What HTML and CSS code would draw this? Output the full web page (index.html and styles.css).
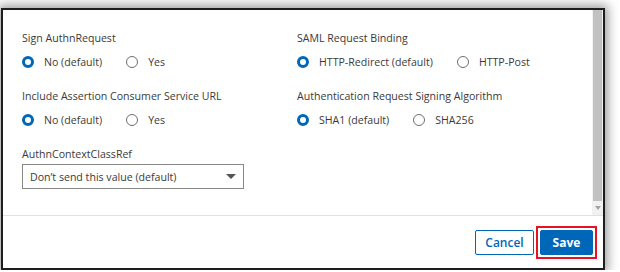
FILE: index.html
```html
<!doctype html>
<html lang="en">
  <head>
    <meta charset="UTF-8" />
    <title>SAML Settings</title>
    <link rel="stylesheet" href="styles.css">
  </head>
  <body>
    <div class="dialog">
      <div class="dialog-body">
        <div class="settings">
          <div class="field">
            <div class="field-label">Sign AuthnRequest</div>
            <div class="radio-group">
              <label class="radio"><span class="dot checked"></span>No (default)</label>
              <label class="radio"><span class="dot"></span>Yes</label>
            </div>
          </div>
          <div class="field">
            <div class="field-label">SAML Request Binding</div>
            <div class="radio-group">
              <label class="radio"><span class="dot checked"></span>HTTP-Redirect (default)</label>
              <label class="radio"><span class="dot"></span>HTTP-Post</label>
            </div>
          </div>
          <div class="field">
            <div class="field-label">Include Assertion Consumer Service URL</div>
            <div class="radio-group">
              <label class="radio"><span class="dot checked"></span>No (default)</label>
              <label class="radio"><span class="dot"></span>Yes</label>
            </div>
          </div>
          <div class="field">
            <div class="field-label">Authentication Request Signing Algorithm</div>
            <div class="radio-group">
              <label class="radio"><span class="dot checked"></span>SHA1 (default)</label>
              <label class="radio"><span class="dot"></span>SHA256</label>
            </div>
          </div>
          <div class="field">
            <div class="field-label select-label">AuthnContextClassRef</div>
            <div class="select">
              <span>Don’t send this value (default)</span>
              <span class="caret"></span>
            </div>
          </div>
        </div>
        <div class="scrollbar">
          <div class="thumb"></div>
          <div class="arrow"></div>
        </div>
      </div>
      <div class="dialog-footer">
        <button class="btn btn-outline">Cancel</button>
        <div class="highlight">
          <button class="btn btn-primary">Save</button>
        </div>
      </div>
    </div>
  </body>
</html>
```

FILE: styles.css
```css
body {
  margin: 0;
  padding: 8px 0 0 1px;
  background-color: #ffffff;
  font-family: "Open Sans", Arial, sans-serif;
  font-size: 10.6px;
  color: #3b3a39;
}
.dialog {
  width: 600px;
  height: 258px;
  border: 2px solid #1e1e1e;
  background-color: #ffffff;
  box-shadow: 0 0 10px 3px rgba(0, 0, 0, 0.38);
  display: flex;
  flex-direction: column;
}
.dialog-body {
  display: flex;
  height: 205px;
}
.settings {
  flex: 1;
  padding: 20px 0 0 19px;
  display: grid;
  grid-template-columns: 275px 1fr;
  grid-auto-rows: min-content;
  row-gap: 18px;
}
.field-label {
  line-height: 16px;
  margin-bottom: 8px;
}
.select-label {
  margin-bottom: 2px;
}
.radio-group {
  display: flex;
  gap: 24px;
  height: 16px;
  align-items: center;
}
.radio {
  display: flex;
  align-items: center;
  gap: 10px;
}
.dot {
  width: 12px;
  height: 12px;
  border: 1px solid #6e6e6e;
  border-radius: 50%;
  box-sizing: border-box;
}
.dot.checked {
  border: 3.5px solid #0067b8;
}
.select {
  width: 222px;
  height: 25px;
  box-sizing: border-box;
  border: 1px solid #8a8886;
  display: flex;
  align-items: center;
  justify-content: space-between;
  padding: 0 7px 0 7px;
}
.caret {
  width: 0;
  height: 0;
  border-left: 5px solid transparent;
  border-right: 5px solid transparent;
  border-top: 5px solid #555555;
}
.scrollbar {
  width: 11px;
  background-color: #f1f1f1;
  display: flex;
  flex-direction: column;
  align-items: center;
}
.thumb {
  width: 9px;
  height: 191px;
  background-color: #c1c1c1;
}
.arrow {
  margin-top: 5px;
  width: 0;
  height: 0;
  border-left: 3px solid transparent;
  border-right: 3px solid transparent;
  border-top: 4px solid #a3a3a3;
}
.dialog-footer {
  flex: 1;
  border-top: 1px solid #e1e1e1;
  display: flex;
  justify-content: flex-end;
  align-items: center;
  gap: 2px;
  padding-right: 6px;
}
.btn {
  height: 25px;
  padding: 0;
  font-family: "Open Sans", Arial, sans-serif;
  font-size: 12px;
  font-weight: 600;
  border-radius: 2px;
  cursor: pointer;
}
.btn-outline {
  width: 59px;
  background-color: #ffffff;
  color: #0067b8;
  border: 1px solid #0067b8;
}
.highlight {
  border: 2px solid #e81123;
  padding: 2px;
}
.btn-primary {
  width: 53px;
  display: block;
  background-color: #0067b8;
  color: #ffffff;
  border: 1px solid #0067b8;
  font-weight: 700;
}
```
